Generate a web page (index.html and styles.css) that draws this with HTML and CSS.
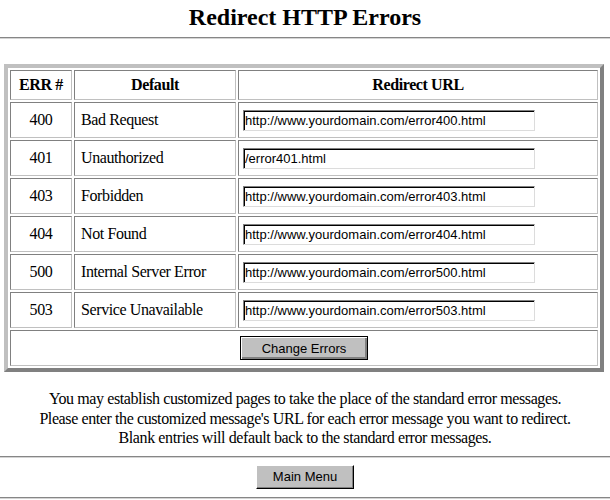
FILE: index.html
```html
<!DOCTYPE html>
<html lang="en">
  <head>
    <meta charset="UTF-8" />
    <title>Redirect HTTP Errors</title>
    <link rel="stylesheet" href="styles.css">
  </head>
  <body>
    <h2 class="title">Redirect HTTP Errors</h2>
    <hr class="rule top-rule">
    <form class="error-form">
      <table class="errors">
        <tr class="head-row">
          <th class="col-code">ERR #</th>
          <th class="col-default">Default</th>
          <th class="col-url">Redirect URL</th>
        </tr>
        <tr>
          <td class="code">400</td>
          <td class="name">Bad Request</td>
          <td class="url"><input type="text" class="url-input" value="http://www.yourdomain.com/error400.html"></td>
        </tr>
        <tr>
          <td class="code">401</td>
          <td class="name">Unauthorized</td>
          <td class="url"><input type="text" class="url-input" value="/error401.html"></td>
        </tr>
        <tr>
          <td class="code">403</td>
          <td class="name">Forbidden</td>
          <td class="url"><input type="text" class="url-input" value="http://www.yourdomain.com/error403.html"></td>
        </tr>
        <tr>
          <td class="code">404</td>
          <td class="name">Not Found</td>
          <td class="url"><input type="text" class="url-input" value="http://www.yourdomain.com/error404.html"></td>
        </tr>
        <tr>
          <td class="code">500</td>
          <td class="name">Internal Server Error</td>
          <td class="url"><input type="text" class="url-input" value="http://www.yourdomain.com/error500.html"></td>
        </tr>
        <tr>
          <td class="code">503</td>
          <td class="name">Service Unavailable</td>
          <td class="url"><input type="text" class="url-input" value="http://www.yourdomain.com/error503.html"></td>
        </tr>
        <tr>
          <td class="submit-cell" colspan="3">
            <button type="button" class="btn btn-default">Change Errors</button>
          </td>
        </tr>
      </table>
    </form>
    <p class="note">
      You may establish customized pages to take the place of the standard error messages.<br>
      Please enter the customized message's URL for each error message you want to redirect.<br>
      Blank entries will default back to the standard error messages.
    </p>
    <hr class="rule">
    <div class="menu">
      <button type="button" class="btn btn-menu">Main Menu</button>
    </div>
    <hr class="rule">
  </body>
</html>
```

FILE: styles.css
```css
body {
  font-family: "Liberation Serif", "Times New Roman", serif;
  font-size: 16px;
  letter-spacing: -0.4px;
  color: #000;
  background-color: #fff;
  margin: 0;
  padding: 0;
}
.title {
  font-size: 24px;
  font-weight: bold;
  letter-spacing: 0;
  text-align: center;
  line-height: 28px;
  margin: 0;
  padding-top: 3px;
}
.rule {
  height: 0;
  margin: 0;
  border: 0;
  border-top: 1px solid #868686;
  border-bottom: 1px solid #d4d4d4;
}
.top-rule {
  margin-top: 6px;
}
.error-form {
  margin: 25px 0 0 4px;
}
.errors {
  width: 600px;
  border-collapse: separate;
  border-spacing: 2px;
  border: 4px solid;
  border-color: #c0c0c0 #808080 #808080 #c0c0c0;
}
.errors th,
.errors td {
  border: 1px solid;
  border-color: #808080 #c0c0c0 #c0c0c0 #808080;
  padding: 0 6px;
  height: 34px;
}
.errors .head-row th {
  height: 28px;
  font-weight: bold;
  text-align: center;
}
.col-code {
  width: 48px;
}
.col-default {
  width: 148px;
}
.code {
  text-align: center;
}
.name {
  text-align: left;
}
.errors .url {
  padding-left: 4px;
}
.url-input {
  box-sizing: border-box;
  width: 292px;
  height: 21px;
  margin: 0;
  padding: 1px 1px 0;
  font-family: "Liberation Sans", Arial, sans-serif;
  font-size: 13px;
  letter-spacing: 0;
  color: #000;
  background: #fff;
  border: 1px solid;
  border-color: #808080 #dcdcdc #dcdcdc #808080;
  box-shadow: inset 1px 1px 0 #000;
  outline: none;
}
.submit-cell {
  text-align: center;
}
.btn {
  box-sizing: border-box;
  height: 24px;
  margin: 0;
  padding: 0;
  font-family: "Liberation Sans", Arial, sans-serif;
  font-size: 13px;
  letter-spacing: 0;
  color: #000;
  background-color: #c0c0c0;
  border: 1px solid;
  border-color: #fff #000 #000 #fff;
  box-shadow: inset -1px -1px 0 #808080;
  cursor: pointer;
}
.btn-default {
  width: 128px;
  border: 1px solid #000;
  box-shadow: inset 1px 1px 0 #fff, inset -2px -2px 0 #808080;
}
.btn-menu {
  width: 98px;
}
.note {
  text-align: center;
  line-height: 19.5px;
  margin: 17px 0 8px;
}
.menu {
  text-align: center;
  padding: 7px 0 8px 0;
}
```
